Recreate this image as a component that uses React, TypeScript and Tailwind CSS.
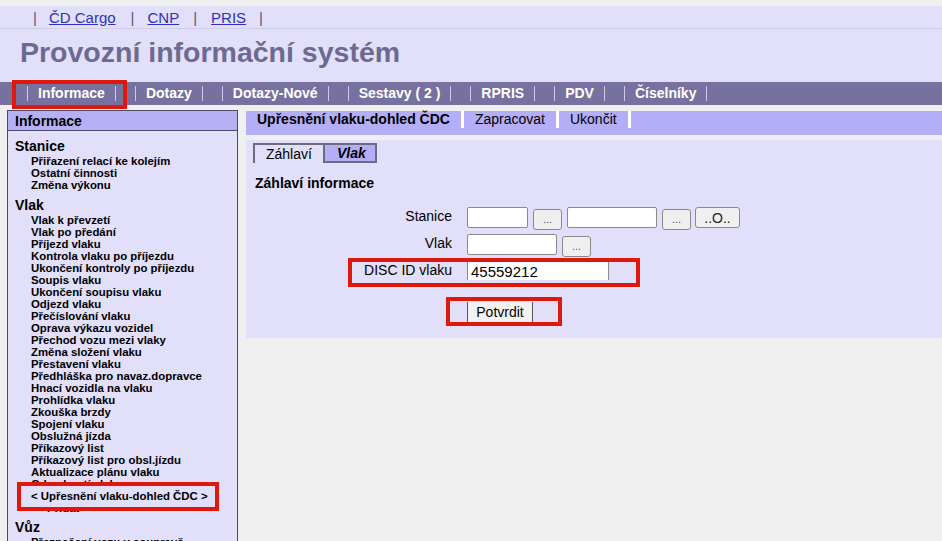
import React from 'react';

const navItems = ['Informace', 'Dotazy', 'Dotazy-Nové', 'Sestavy ( 2 )', 'RPRIS', 'PDV', 'Číselníky'];

const stanice = ['Přiřazení relací ke kolejím', 'Ostatní činnosti', 'Změna výkonu'];

const vlak = [
  'Vlak k převzetí',
  'Vlak po předání',
  'Příjezd vlaku',
  'Kontrola vlaku po příjezdu',
  'Ukončení kontroly po příjezdu',
  'Soupis vlaku',
  'Ukončení soupisu vlaku',
  'Odjezd vlaku',
  'Přečíslování vlaku',
  'Oprava výkazu vozidel',
  'Přechod vozu mezi vlaky',
  'Změna složení vlaku',
  'Přestavení vlaku',
  'Předhláška pro navaz.dopravce',
  'Hnací vozidla na vlaku',
  'Prohlídka vlaku',
  'Zkouška brzdy',
  'Spojení vlaku',
  'Obslužná jízda',
  'Příkazový list',
  'Příkazový list pro obsl.jízdu',
  'Aktualizace plánu vlaku',
  'Odemknutí vlaku',
  '< Upřesnění vlaku-dohled ČDC >',
];

const SmallBtn = ({ label, w }: { label: string; w: string }) => (
  <button className={`${w} h-[21px] bg-[#efefef] border border-[#8a8a8a] rounded-[3px] text-[11px] text-[#555] leading-none`}>
    {label}
  </button>
);

export default function App() {
  return (
    <div className="relative w-[942px] h-[541px] overflow-hidden bg-[#efefef] font-['Liberation_Sans',Arial,sans-serif] text-black">
      {/* header */}
      <div className="mt-[6px] bg-[#e1dffa] h-[76px]">
        <div className="h-[23px] border-b border-[#cfcde8] flex items-center pl-[33px] text-[15px] leading-none text-[#5a5878]">
          <span>|</span>
          <a className="ml-[12px] text-[#3030b8] underline">ČD Cargo</a>
          <span className="ml-[15px]">|</span>
          <a className="ml-[13px] text-[#3030b8] underline">CNP</a>
          <span className="ml-[14px]">|</span>
          <a className="ml-[14px] text-[#3030b8] underline">PRIS</a>
          <span className="ml-[13px]">|</span>
        </div>
        <h1 className="mt-[6px] ml-[20px] text-[28.5px] leading-[34px] font-bold text-[#6d6991]">Provozní informační systém</h1>
      </div>

      {/* nav */}
      <div className="h-[23px] bg-[#77719f] flex items-center pl-[27px] gap-[19px]">
        {navItems.map((n) => (
          <span key={n} className="border-x border-[#cdc9e6] px-[10px] leading-[15px] text-[14px] font-bold text-white">
            {n}
          </span>
        ))}
      </div>
      <div className="absolute left-[12px] top-[80px] w-[115px] h-[29px] border-4 border-[#e0180c]" />

      <div className="flex mt-[5px]">
        {/* sidebar */}
        <div className="relative ml-[7px] w-[231px] h-[440px] border border-[#4d4a66] bg-[#e1dffa]">
          <div className="h-[20px] bg-[#b5b0f3] border-b border-[#4d4a66] pl-[7px] text-[14px] font-bold leading-[20px]">Informace</div>
          <div className="pl-[7px] pt-[6px]">
            <div className="text-[14px] font-bold leading-[18px]">Stanice</div>
            {stanice.map((s) => (
              <div key={s} className="pl-[16px] text-[11.4px] font-bold leading-[12px]">{s}</div>
            ))}
            <div className="mt-[5px] text-[14px] font-bold leading-[18px]">Vlak</div>
            {vlak.map((s) => (
              <div key={s} className="pl-[16px] text-[11.4px] font-bold leading-[12px]">{s}</div>
            ))}
            <div className="pl-[32px] text-[11.4px] font-bold leading-[12px]">Přidat</div>
            <div className="mt-[4px] text-[14px] font-bold leading-[18px]">Vůz</div>
            <div className="pl-[16px] text-[11.4px] font-bold leading-[12px]">Přeznačení vozu v soupravě</div>
          </div>
          <div className="absolute left-[9px] top-[371px] w-[202px] h-[29px] border-4 border-[#e0180c] bg-[#e1dffa] pl-[10px] text-[11.4px] font-bold leading-[21px]">
            &lt; Upřesnění vlaku-dohled ČDC &gt;
          </div>
        </div>

        {/* main */}
        <div className="ml-[8px] flex-1">
          <div className="mt-[1px] h-[24px] bg-[#b4aef9] flex items-start">
            <span className="h-[17px] px-[11px] border-r-[3px] border-white text-[14px] font-bold leading-[17px]">Upřesnění vlaku-dohled ČDC</span>
            <span className="h-[17px] px-[11px] border-r-[3px] border-white text-[14px] leading-[17px]">Zapracovat</span>
            <span className="h-[17px] px-[11px] border-r-[3px] border-white text-[14px] leading-[17px]">Ukončit</span>
          </div>

          <div className="relative mt-[5px] h-[198px] bg-[#e1dffa] pt-[3px]">
            <div className="flex ml-[7px]">
              <div className="w-[70px] h-[20px] border-l-2 border-t-2 border-[#6e6b80] pl-[11px] text-[14px] leading-[18px]">Záhlaví</div>
              <div className="w-[54px] h-[20px] border-2 border-[#6e6b80] bg-[#b4aef9] pl-[12px] text-[14px] font-bold italic leading-[16px]">Vlak</div>
            </div>
            <div className="mt-[11px] ml-[9px] text-[14px] font-bold leading-[18px]">Záhlaví informace</div>

            <div className="mt-[15px] flex items-center h-[21px]">
              <span className="w-[206px] text-right text-[14px] leading-none -mt-[4px]">Stanice</span>
              <input className="ml-[15px] w-[61px] h-[21px] bg-white border border-[#8a8a8a] rounded-[2px]" />
              <span className="ml-[5px]"><SmallBtn label="..." w="w-[29px]" /></span>
              <input className="ml-[5px] w-[90px] h-[21px] bg-white border border-[#8a8a8a] rounded-[2px]" />
              <span className="ml-[5px]"><SmallBtn label="..." w="w-[29px]" /></span>
              <button className="ml-[4px] w-[45px] h-[21px] bg-[#efefef] border border-[#8a8a8a] rounded-[3px] text-[14px] leading-none text-[#222]">..O..</button>
            </div>
            <div className="mt-[6px] flex items-center h-[21px]">
              <span className="w-[206px] text-right text-[14px] leading-none -mt-[4px]">Vlak</span>
              <input className="ml-[15px] w-[90px] h-[21px] bg-white border border-[#8a8a8a] rounded-[2px]" />
              <span className="ml-[5px]"><SmallBtn label="..." w="w-[29px]" /></span>
            </div>
            <div className="mt-[7px] flex items-center h-[18px]">
              <span className="w-[206px] text-right text-[14px] leading-none -mt-[2px]">DISC ID vlaku</span>
              <div className="ml-[15px] w-[142px] h-[18px] bg-white border-x border-[#8a8a8a] pl-[3px] text-[15px] leading-[20px]">45559212</div>
            </div>
            <div className="mt-[20px] ml-[221px]">
              <button className="w-[66px] h-[21px] bg-[#f2f2f2] border-x border-[#555] text-[14px] leading-[21px]">Potvrdit</button>
            </div>

            <div className="absolute left-[102px] top-[118px] w-[292px] h-[29px] border-4 border-[#e0180c]" />
            <div className="absolute left-[200px] top-[157px] w-[116px] h-[29px] border-4 border-[#e0180c]" />
          </div>
        </div>
      </div>
    </div>
  );
}
